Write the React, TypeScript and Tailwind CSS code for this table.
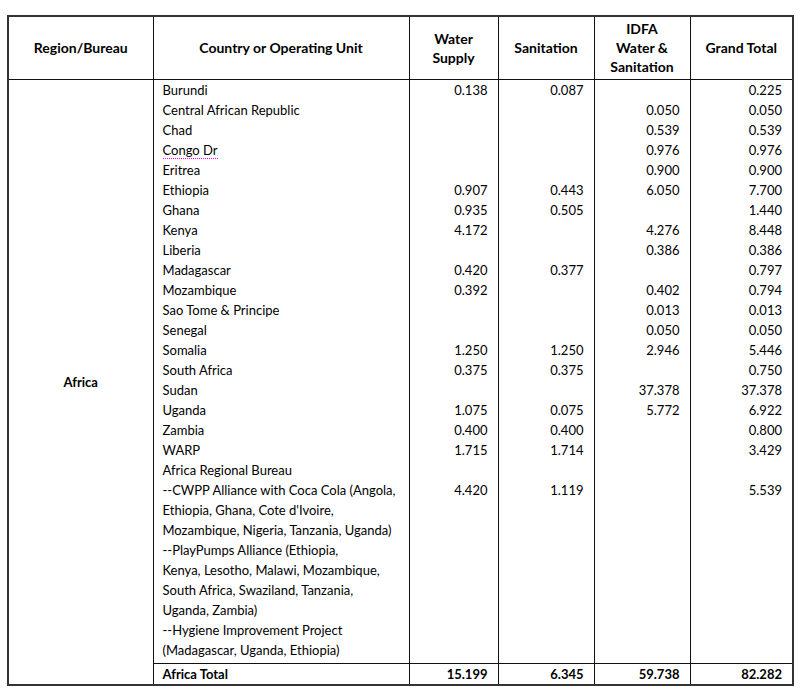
type Row = {
  name: string[];
  water?: string;
  sanitation?: string;
  idfa?: string;
  total?: string;
  flag?: boolean;
};

const rows: Row[] = [
  { name: ["Burundi"], water: "0.138", sanitation: "0.087", total: "0.225" },
  { name: ["Central African Republic"], idfa: "0.050", total: "0.050" },
  { name: ["Chad"], idfa: "0.539", total: "0.539" },
  { name: ["Congo Dr"], idfa: "0.976", total: "0.976", flag: true },
  { name: ["Eritrea"], idfa: "0.900", total: "0.900" },
  { name: ["Ethiopia"], water: "0.907", sanitation: "0.443", idfa: "6.050", total: "7.700" },
  { name: ["Ghana"], water: "0.935", sanitation: "0.505", total: "1.440" },
  { name: ["Kenya"], water: "4.172", idfa: "4.276", total: "8.448" },
  { name: ["Liberia"], idfa: "0.386", total: "0.386" },
  { name: ["Madagascar"], water: "0.420", sanitation: "0.377", total: "0.797" },
  { name: ["Mozambique"], water: "0.392", idfa: "0.402", total: "0.794" },
  { name: ["Sao Tome & Principe"], idfa: "0.013", total: "0.013" },
  { name: ["Senegal"], idfa: "0.050", total: "0.050" },
  { name: ["Somalia"], water: "1.250", sanitation: "1.250", idfa: "2.946", total: "5.446" },
  { name: ["South Africa"], water: "0.375", sanitation: "0.375", total: "0.750" },
  { name: ["Sudan"], idfa: "37.378", total: "37.378" },
  { name: ["Uganda"], water: "1.075", sanitation: "0.075", idfa: "5.772", total: "6.922" },
  { name: ["Zambia"], water: "0.400", sanitation: "0.400", total: "0.800" },
  { name: ["WARP"], water: "1.715", sanitation: "1.714", total: "3.429" },
  { name: ["Africa Regional Bureau"] },
  {
    name: [
      "--CWPP Alliance with Coca Cola (Angola,",
      "Ethiopia, Ghana, Cote d'Ivoire,",
      "Mozambique, Nigeria, Tanzania, Uganda)",
    ],
    water: "4.420",
    sanitation: "1.119",
    total: "5.539",
  },
  {
    name: [
      "--PlayPumps Alliance (Ethiopia,",
      "Kenya, Lesotho, Malawi, Mozambique,",
      "South Africa, Swaziland, Tanzania,",
      "Uganda, Zambia)",
    ],
  },
  {
    name: ["--Hygiene Improvement Project", "(Madagascar, Uganda, Ethiopia)"],
  },
];

const num = "border-x border-[#111] pr-[10px] text-right align-top";

export default function App() {
  return (
    <div className="min-h-[697px] bg-white pl-[7px] pt-[15px] font-['Lato',sans-serif] text-[13px] text-black">
      <table className="w-[785px] table-fixed border-collapse border-2 border-[#333]">
        <colgroup>
          <col className="w-[145px]" />
          <col className="w-[256px]" />
          <col className="w-[89px]" />
          <col className="w-[96px]" />
          <col className="w-[96px]" />
          <col className="w-[103px]" />
        </colgroup>
        <thead>
          <tr className="h-[63px] border-b border-[#111] text-center text-[14px] font-bold leading-[19px]">
            <th className="border-r border-[#111]">Region/Bureau</th>
            <th className="border-r border-[#111]">Country or Operating Unit</th>
            <th className="border-r border-[#111]">
              Water
              <br />
              Supply
            </th>
            <th className="border-r border-[#111]">Sanitation</th>
            <th className="border-r border-[#111]">
              IDFA
              <br />
              Water &amp;
              <br />
              Sanitation
            </th>
            <th>Grand Total</th>
          </tr>
        </thead>
        <tbody className="leading-[20px]">
          {rows.map((r, i) => (
            <tr key={i}>
              {i === 0 && (
                <td rowSpan={rows.length + 1} className="border-r border-[#111] text-center align-middle font-bold">
                  Africa
                </td>
              )}
              <td className={`border-x border-[#111] pl-[9px] align-top whitespace-nowrap ${i === rows.length - 1 ? "pb-[3px]" : ""}`}>
                {r.name.map((line, j) => (
                  <div key={j}>
                    {r.flag ? (
                      <span className="border-b border-dotted border-[#ff00ff]">{line}</span>
                    ) : (
                      line
                    )}
                  </div>
                ))}
              </td>
              <td className={num}>{r.water}</td>
              <td className={num}>{r.sanitation}</td>
              <td className={num}>{r.idfa}</td>
              <td className={num}>{r.total}</td>
            </tr>
          ))}
          <tr className="h-[21px] border-t border-[#111] font-bold">
            <td className="border-x border-[#111] pl-[9px]">Africa Total</td>
            <td className="border-x border-[#111] pr-[10px] text-right">15.199</td>
            <td className="border-x border-[#111] pr-[10px] text-right">6.345</td>
            <td className="border-x border-[#111] pr-[10px] text-right">59.738</td>
            <td className="border-x border-[#111] pr-[10px] text-right">82.282</td>
          </tr>
        </tbody>
      </table>
    </div>
  );
}
